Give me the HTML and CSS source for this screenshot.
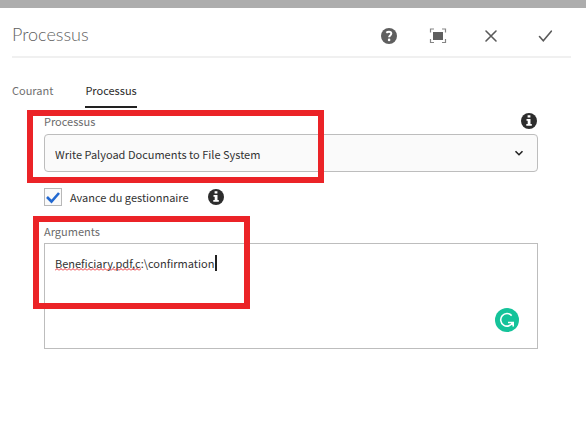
FILE: index.html
```
<!DOCTYPE html>
<html lang="fr">
<head>
<meta charset="utf-8">
<title>Processus</title>
<link rel="stylesheet" href="styles.css">
</head>
<body>
<main class="dialog">
  <header class="dialog-header">
    <h1 class="dialog-title">Processus</h1>
    <div class="actions">
      <button class="icon-button" type="button" aria-label="Aide">
        <svg viewBox="0 0 18 18" width="18" height="18"><circle cx="9" cy="9" r="8" fill="#5f5f5f"/><path d="M6.300 5.800C7.200 5 8 4.700 9 4.700c1.500 0 2.300.8 2.300 1.900 0 1.800-2.200 1.900-2.200 3.700" fill="none" stroke="#fff" stroke-width="2"/><circle cx="9.100" cy="12.900" r="1.300" fill="#fff"/></svg>
      </button>
      <button class="icon-button" type="button" aria-label="Plein écran">
        <svg viewBox="0 0 18 18" width="18" height="18"><path d="M4 5h10v8H4z" fill="#5f5f5f"/><path d="M1.500 5.500v-3.500h3.500M13 2h3.500v3.500M16.500 12v3.500H13M5 15.500H1.500V12" fill="none" stroke="#858585" stroke-width="1.200"/></svg>
      </button>
      <button class="icon-button" type="button" aria-label="Fermer">
        <svg viewBox="0 0 18 18" width="18" height="18"><path d="M4 4l10 10M14 4L4 14" fill="none" stroke="#5a5a5a" stroke-width="1.600" stroke-linecap="round"/></svg>
      </button>
      <button class="icon-button" type="button" aria-label="Valider">
        <svg viewBox="0 0 18 18" width="18" height="18"><path d="M3.500 9.500l3.800 4.300L15.300 4.200" fill="none" stroke="#5a5a5a" stroke-width="1.600" stroke-linecap="round"/></svg>
      </button>
    </div>
  </header>
  <nav class="tabs">
    <a class="tab" href="#courant">Courant</a>
    <a class="tab tab-selected" href="#processus" aria-current="page">Processus</a>
  </nav>
  <form class="panel">
    <div class="field">
      <div class="label-row">
        <label class="label" for="process">Processus</label>
        <button class="info" type="button" aria-label="Informations sur le processus">
          <svg viewBox="0 0 18 18" width="18" height="18"><circle cx="9" cy="9" r="8" fill="#2d2d2d"/><path d="M7.600 3.300h2.800v2.200H7.600zM6.500 7h4v5h1.300v1.800H6.300V12h1.400V8.700H6.500z" fill="#fff"/></svg>
        </button>
      </div>
      <div class="select-wrap">
        <select class="select" id="process"><option>Write Palyoad Documents to File System</option></select>
        <svg class="chevron" viewBox="0 0 10 10" width="10" height="10"><path d="M1.500 3.200L5 6.700l3.500-3.500" fill="none" stroke="#222" stroke-width="1.600"/></svg>
      </div>
      <span class="highlight highlight-process"></span>
    </div>
    <div class="check-row">
      <input class="checkbox" type="checkbox" id="advance" checked>
      <label class="check-label" for="advance">Avance du gestionnaire</label>
      <button class="info" type="button" aria-label="Informations sur l’avance">
        <svg viewBox="0 0 18 18" width="18" height="18"><circle cx="9" cy="9" r="8" fill="#2d2d2d"/><path d="M7.600 3.300h2.800v2.200H7.600zM6.500 7h4v5h1.300v1.800H6.300V12h1.400V8.700H6.500z" fill="#fff"/></svg>
      </button>
    </div>
    <div class="field">
      <label class="label arguments-label" for="arguments">Arguments</label>
      <div class="area-wrap">
        <textarea class="area" id="arguments" spellcheck="false">Beneficiary.pdf,c:\confirmation</textarea>
        <svg class="squiggle" width="86" height="3" viewBox="0 0 86 3"><defs><pattern id="wave" width="4" height="3" patternUnits="userSpaceOnUse"><path d="M0 2.500L2 .5l2 2" fill="none" stroke="#e8262c"/></pattern></defs><rect width="86" height="3" fill="url(#wave)"/></svg>
        <span class="caret"></span>
        <svg class="checker" viewBox="0 0 24 24" width="24" height="24"><circle cx="12" cy="12" r="12" fill="#15c39a"/><path d="M16.700 7.600A6.300 6.300 0 1 0 17.700 14.500M13 14.500h5.200v4" fill="none" stroke="#fff" stroke-width="1.600"/></svg>
      </div>
      <span class="highlight highlight-arguments"></span>
    </div>
  </form>
</main>
</body>
</html>
```
FILE: styles.css
```
* { box-sizing: border-box; }
body {
  margin: 0;
  background: #fff;
  color: #323232;
  font: 11px/18px "Noto Sans CJK SC", "Noto Sans", sans-serif;
}
button { padding: 0; border: 0; background: none; }
svg { display: block; }
.dialog { border-top: 8px solid #adadad; }
.dialog-header {
  display: flex;
  align-items: center;
  justify-content: space-between;
  height: 50px;
  margin: 0 15px 0 12px;
  padding-top: 4px;
  border-bottom: 2px solid #f0f0f0;
}
.dialog-title {
  margin: 0;
  color: #5f5f5f;
  font: 300 18px/28px Lato, sans-serif;
}
.actions {
  display: grid;
  grid-template-columns: 49px 53px 54px 18px;
  padding: 4px 17px 0 0;
}
.icon-button { width: 18px; height: 18px; }
.tabs { display: flex; gap: 32px; padding: 23px 12px 0; }
.tab {
  height: 27px;
  border-bottom: 2px solid transparent;
  color: #707070;
  text-decoration: none;
}
.tab-selected { border-color: #222; color: #2a2a2a; }
.panel { padding: 4px 48px 0 44px; }
.field { position: relative; }
.label-row {
  display: flex;
  justify-content: space-between;
  height: 22px;
}
.label { color: #6b6b6b; }
.info { width: 18px; height: 18px; }
.select-wrap { position: relative; }
.select {
  appearance: none;
  display: block;
  width: 100%;
  height: 38px;
  padding: 2px 32px 0 10px;
  border: 1px solid #bdbdbd;
  border-radius: 4px;
  background: #fafafa;
  color: #323232;
  font: inherit;
}
.chevron { position: absolute; top: 14px; right: 14px; }
.check-row { display: flex; align-items: center; height: 18px; margin: 16px 0; }
.checkbox {
  appearance: none;
  width: 18px;
  height: 18px;
  margin: 0 8px 0 0;
  border: 1px solid #b8b8b8;
  background: #fafafa;
}
.checkbox:checked {
  background: #fafafa url("data:image/svg+xml,%3Csvg xmlns='http://www.w3.org/2000/svg' viewBox='0 0 16 16'%3E%3Cpath d='M2 8l4.500 4.500L14 4' fill='none' stroke='%232268d0' stroke-width='2.600'/%3E%3C/svg%3E");
}
.check-label { margin-right: 18px; }
.arguments-label { display: block; padding-bottom: 3px; }
.area-wrap { position: relative; }
.area {
  display: block;
  width: 100%;
  height: 106px;
  padding: 10px;
  border: 1px solid #bdbdbd;
  border-radius: 0;
  outline: 0;
  background: #fff;
  color: #323232;
  font: inherit;
  resize: none;
}
.squiggle { position: absolute; top: 25px; left: 11px; }
.caret { position: absolute; top: 12px; left: 171px; width: 2px; height: 16px; background: #222; }
.checker { position: absolute; right: 19px; bottom: 17px; }
.highlight { position: absolute; border: 6px solid #eb2327; pointer-events: none; }
.highlight-process { top: -2px; left: -17px; width: 297px; height: 73px; }
.highlight-arguments { top: -6px; left: -11px; width: 217px; height: 93px; }
```
